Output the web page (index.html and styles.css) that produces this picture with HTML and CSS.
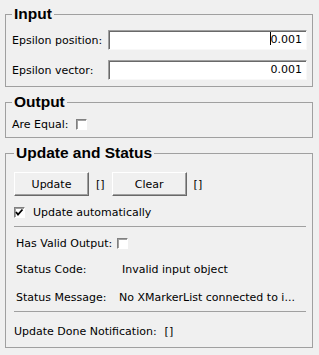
FILE: index.html
```html
<!DOCTYPE html>
<html lang="en">
<head>
  <meta charset="UTF-8" />
  <title>Compare XMarkerLists</title>
  <link rel="stylesheet" href="styles.css">
</head>
<body>
  <fieldset class="group group-input">
    <legend>Input</legend>
    <div class="field-row">
      <label>Epsilon position:</label>
      <div class="line-edit"><span class="caret"></span>0.001</div>
    </div>
    <div class="field-row">
      <label>Epsilon vector:</label>
      <div class="line-edit">0.001</div>
    </div>
  </fieldset>

  <fieldset class="group group-output">
    <legend>Output</legend>
    <div class="row">
      <span>Are Equal:</span>
      <span class="check"></span>
    </div>
  </fieldset>

  <fieldset class="group group-status">
    <legend>Update and Status</legend>
    <div class="button-row">
      <button class="push">Update</button>
      <span>[]</span>
      <button class="push">Clear</button>
      <span>[]</span>
    </div>
    <div class="row auto-row">
      <span class="check checked">
        <svg width="9" height="9" viewBox="0 0 9 9"><polyline points="1,4 3,6.5 7.5,1.5" fill="none" stroke="#000" stroke-width="1.8"/></svg>
      </span>
      <span>Update automatically</span>
    </div>
    <div class="separator"></div>
    <div class="row indent valid-row">
      <span>Has Valid Output:</span>
      <span class="check check-near"></span>
    </div>
    <div class="info-row code-row">
      <span>Status Code:</span>
      <span class="code-value">Invalid input object</span>
    </div>
    <div class="info-row message-row">
      <span>Status Message:</span>
      <span>No XMarkerList connected to i...</span>
    </div>
    <div class="separator separator-low"></div>
    <div class="row done-row">
      <span>Update Done Notification:</span>
      <span>[]</span>
    </div>
  </fieldset>
</body>
</html>
```

FILE: styles.css
```css
body {
  margin: 0;
  padding: 5px 6px 6px 5px;
  background-color: #f0f0f0;
  color: #000;
  font-family: 'DejaVu Sans', sans-serif;
  font-size: 11px;
}
.group {
  margin: 0 0 6px 0;
  border: 1px solid #a0a0a0;
  padding: 0 5px 6px 6px;
  min-width: 0;
}
.group legend {
  padding: 0 2px;
  font-family: 'Liberation Sans', Arial, sans-serif;
  font-weight: bold;
  font-size: 15.5px;
  line-height: 18px;
}
.group-input {
  padding-top: 7px;
}
.field-row {
  display: grid;
  grid-template-columns: 96px 1fr;
  align-items: center;
  height: 20px;
  margin-bottom: 10px;
}
.field-row:last-child {
  margin-bottom: 0;
}
.line-edit {
  box-sizing: border-box;
  height: 20px;
  background-color: #fff;
  border: 1px solid;
  border-color: #a0a0a0 #f8f8f8 #f8f8f8 #a0a0a0;
  box-shadow: inset 1px 1px 0 #696969;
  text-align: right;
  padding-right: 4px;
  line-height: 18px;
}
.caret {
  display: inline-block;
  width: 1px;
  height: 13px;
  background-color: #000;
  vertical-align: -2px;
}
.row {
  display: flex;
  align-items: center;
  gap: 8px;
  height: 16px;
}
.group-output {
  padding-top: 5px;
  padding-bottom: 5px;
}
.check {
  box-sizing: border-box;
  display: inline-flex;
  align-items: center;
  justify-content: center;
  width: 11px;
  height: 11px;
  background-color: #fff;
  border: 1px solid;
  border-color: #808080 #fff #fff #808080;
  box-shadow: inset 1px 1px 0 #a0a0a0;
}
.check-near {
  margin-left: -3px;
}
.group-status {
  padding: 10px 6px 8px 8px;
}
.button-row {
  display: flex;
  align-items: center;
  gap: 7px;
}
.push {
  box-sizing: border-box;
  width: 75px;
  height: 24px;
  padding: 0;
  background-color: #f0f0f0;
  border: 1px solid;
  border-color: #fff #696969 #696969 #fff;
  box-shadow: inset -1px -1px 0 #a0a0a0;
  font-family: 'DejaVu Sans', sans-serif;
  font-size: 11px;
  color: #000;
}
.auto-row {
  margin-top: 8px;
}
.separator {
  height: 1px;
  background-color: #a0a0a0;
  margin-top: 6px;
}
.indent {
  padding-left: 2px;
}
.valid-row {
  margin-top: 8px;
}
.info-row {
  display: grid;
  grid-template-columns: 103px 1fr;
  align-items: center;
  height: 16px;
  padding-left: 2px;
}
.code-row {
  margin-top: 10px;
}
.code-value {
  padding-left: 3px;
}
.message-row {
  margin-top: 12px;
}
.separator-low {
  margin-top: 6px;
}
.done-row {
  margin-top: 11px;
}
```
